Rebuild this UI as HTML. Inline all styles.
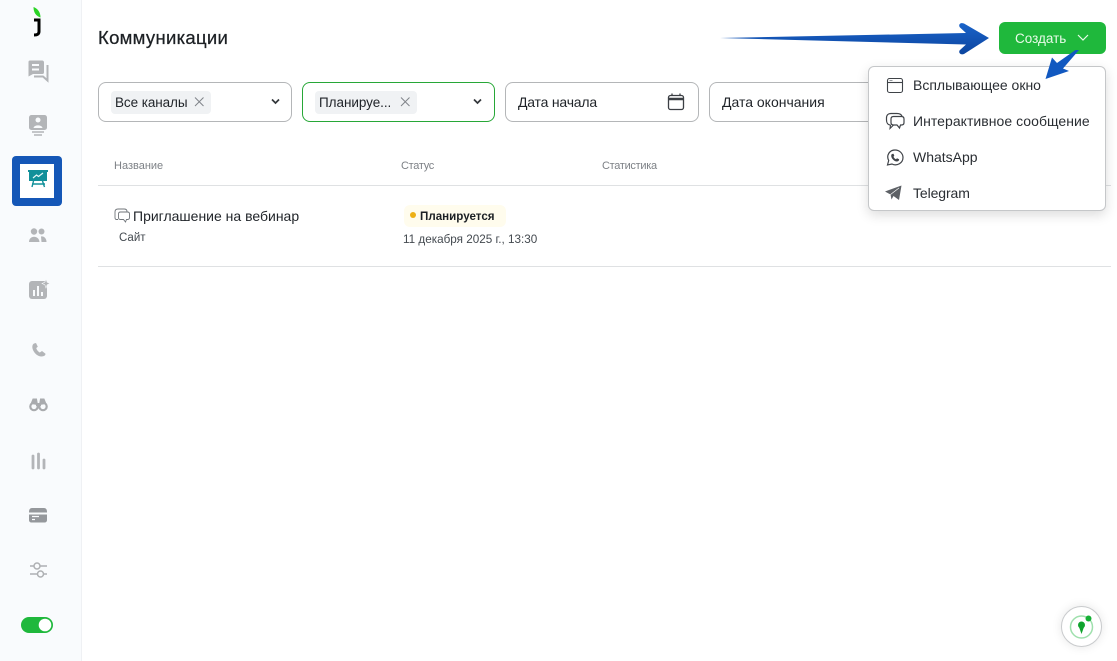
<!DOCTYPE html>
<html lang="ru"><head><meta charset="utf-8"><title>Коммуникации</title>
<style>
*{box-sizing:border-box}
html,body{margin:0;padding:0;width:1117px;height:661px;overflow:hidden;background:#fff;font-family:"Liberation Sans",sans-serif;color:#1f2328}
.a{position:absolute;white-space:nowrap}
svg{position:absolute;overflow:visible}
.box{position:absolute;top:82px;height:40px;border:1px solid #b4b6b8;border-radius:8px;background:#fff}
.t{font-size:14px;line-height:18px}
.th{font-size:11px;color:#7d8186;line-height:14px}
.tag{position:absolute;top:91px;height:23px;background:#f0f2f4;border-radius:4px}
</style></head><body>
<div class="a" style="left:0;top:0;width:82px;height:661px;background:#f9fbfd;border-right:1px solid #eff1f4"></div>

<!-- sidebar icons -->
<svg style="left:0;top:0" width="82" height="661">
<path d="M33.500 7C37.500 8.500 40.500 12 40.500 17.500C36 16 33.500 12.500 33.500 7Z" fill="#2bd326"/>
<path d="M34 20H39V31.500C39 34 37.500 35 34 35" fill="none" stroke="#000" stroke-width="3"/>
<path d="M30 60.500H42C43.500 60.500 44 61.500 44 62.500V72C44 73.500 43.500 74 42 74H33L28.500 76.500V62C28.500 61 29 60.500 30 60.500Z" fill="#b3b5b8"/>
<path d="M32 65H39M32 69.500H39" stroke="#f9fbfd" stroke-width="2"/>
<path d="M46.500 66H47.500V80.500L43 76.500H34" fill="none" stroke="#b3b5b8" stroke-width="2"/>
<rect x="29" y="115" width="18" height="15" rx="2.500" fill="#b3b5b8"/>
<circle cx="38" cy="120" r="2.500" fill="#f9fbfd"/><path d="M33.500 128C34 124.500 42 124.500 42.500 128Z" fill="#f9fbfd"/>
<path d="M32 132H44M34 135H42" stroke="#b3b5b8" stroke-width="1.500"/>
<rect x="12" y="156" width="50" height="50" rx="4" fill="#1557b7"/>
<rect x="20" y="164" width="34" height="34" fill="#fff"/>
<path d="M28 170H48V172H47V181H29V172H28Z" fill="#12909a"/>
<path d="M33 178L36.500 175L38.500 176.500L43 173" fill="none" stroke="#e8f7f7" stroke-width="1.200"/>
<path d="M32 184H45M33.500 181L32 187M42.500 181L44.500 187" fill="none" stroke="#12909a" stroke-width="1.400"/>
<circle cx="34" cy="231.500" r="3.200" fill="#b3b5b8"/><circle cx="41.500" cy="231.500" r="3" fill="#b3b5b8"/>
<path d="M29 242C29 235 39 235 39.500 242Z" fill="#b3b5b8"/><path d="M41 236.500C44 236 46.500 238.500 46.500 242H41.500Z" fill="#b3b5b8"/>
<rect x="29" y="281" width="18" height="18" rx="3" fill="#b3b5b8"/>
<path d="M34 290V296M38 286V296M42 292V296" stroke="#f9fbfd" stroke-width="2"/>
<path d="M46 279L47.200 282.300L50 283.500L47.200 284.700L46 288L44.800 284.700L42 283.500L44.800 282.300Z" fill="#b3b5b8" stroke="#f9fbfd" stroke-width=".6"/>
<path d="M34 343.500C32 344.500 32 347.500 33 350C34.500 353.500 38 356.500 41.500 356.500C44 356.500 45.500 355.500 45.500 353.800L42 351L39.800 352.500C38 351.500 36.500 349.500 36.300 348L37.800 346.800L36 343Z" fill="#b3b5b8"/>
<circle cx="34" cy="406.500" r="3.700" fill="none" stroke="#a9abae" stroke-width="2.200"/><circle cx="43" cy="406.500" r="3.700" fill="none" stroke="#a9abae" stroke-width="2.200"/>
<path d="M31 404L33 399H36.500L37.500 405M46 404L44 399H40.500L39.500 405" fill="#a9abae" stroke="#a9abae"/>
<rect x="36" y="403" width="5" height="3" fill="#a9abae"/>
<path d="M33 456V468M38.500 454V468M44 460V468" stroke="#b3b5b8" stroke-width="2.800" stroke-linecap="round"/>
<path d="M29 512C29 509.500 30 508 32 508H44C46 508 47 509.500 47 512V512.500H29Z" fill="#95989c"/>
<path d="M29 514.500H47V520C47 521.500 46 522.500 44.500 522.500H31.500C30 522.500 29 521.500 29 520Z" fill="#95989c"/>
<path d="M32 516.500H39M32 519.500H35" stroke="#f9fbfd" stroke-width="1.200"/>
<path d="M30 566H33.500M40.500 566H47M30 574H37M43.500 574H47" stroke="#aeb0b3" stroke-width="1.500"/>
<circle cx="37" cy="566" r="3" fill="none" stroke="#aeb0b3" stroke-width="1.500"/><circle cx="40.500" cy="574" r="3" fill="none" stroke="#aeb0b3" stroke-width="1.500"/>
<rect x="21" y="617" width="32" height="16" rx="8" fill="#1fb83c"/><circle cx="45" cy="625" r="6.300" fill="#fff"/>
</svg>

<div class="a" style="left:98px;top:27px;font-size:18.500px;line-height:22px;letter-spacing:.3px;color:#1c2024;-webkit-text-stroke:.25px #1c2024">Коммуникации</div>

<!-- filters -->
<div class="box" style="left:98px;width:194px"></div>
<div class="tag" style="left:111px;width:100px"></div>
<div class="a t" style="left:115px;top:94px;font-size:13.500px;letter-spacing:-.08px">Все каналы</div>
<div class="box" style="left:302px;width:193px;border-color:#27a737"></div>
<div class="tag" style="left:315px;width:102px"></div>
<div class="a t" style="left:319px;top:94px;font-size:13.500px;letter-spacing:-.05px">Планируе...</div>
<div class="box" style="left:505px;width:194px"></div>
<div class="a t" style="left:518px;top:93px;letter-spacing:-.2px">Дата начала</div>
<div class="box" style="left:709px;width:194px"></div>
<div class="a t" style="left:722px;top:93px">Дата окончания</div>
<svg style="left:0;top:0" width="900" height="130">
<path d="M195 97.500L203.500 106M203.500 97.500L195 106" stroke="#808489" stroke-width="1"/>
<path d="M272 99.500L275.500 103L279 99.500" fill="none" stroke="#33373b" stroke-width="1.700"/>
<path d="M401 97.500L409.500 106M409.500 97.500L401 106" stroke="#808489" stroke-width="1"/>
<path d="M474 99.500L477.500 103L481 99.500" fill="none" stroke="#33373b" stroke-width="1.700"/>
<rect x="668.500" y="95.500" width="15" height="14" rx="2" fill="none" stroke="#3b3f44" stroke-width="1.300"/><path d="M668.500 99H683.500" stroke="#3b3f44" stroke-width="2.500"/><path d="M672 93.500V96M680 93.500V96" stroke="#3b3f44" stroke-width="1.300"/>
</svg>

<!-- table -->
<div class="a th" style="left:114px;top:159px">Название</div>
<div class="a th" style="left:401px;top:159px;letter-spacing:-.3px">Статус</div>
<div class="a th" style="left:602px;top:159px;letter-spacing:-.3px">Статистика</div>
<div class="a" style="left:98px;top:185px;width:1013px;height:1px;background:#dfe1e3"></div>
<div class="a" style="left:98px;top:266px;width:1013px;height:1px;background:#dfe1e3"></div>
<svg style="left:0;top:0" width="140" height="230"><path d="M118 219.500L116.500 219.500C115.500 219.500 115 218.500 115 217.500V212C115 210 116 209 118 209H124C126 209 127 210 127 211.500" fill="none" stroke="#70757a" stroke-width=".9"/><path d="M120.500 212H127.500C129 212 129.500 212.500 129.500 214V217.500C129.500 219 129 219.500 127.500 219.500H126.500L125.500 222L123.500 219.500H120.500C119 219.500 118.500 219 118.500 217.500V214C118.500 212.500 119 212 120.500 212Z" fill="#fff" stroke="#70757a" stroke-width=".9"/></svg>
<div class="a" style="left:133px;top:207px;font-size:14px;line-height:18px">Приглашение на вебинар</div>
<div class="a" style="left:119px;top:230px;font-size:11.500px;line-height:16px;color:#444a50">Сайт</div>
<div class="a" style="left:404px;top:205px;width:102px;height:22px;background:#fffced;border-radius:6px"></div>
<div class="a" style="left:410px;top:212px;width:6px;height:6px;border-radius:50%;background:#edb016"></div>
<div class="a" style="left:420px;top:209px;font-size:11.600px;font-weight:700;line-height:16px;color:#1c2024">Планируется</div>
<div class="a" style="left:403px;top:232px;font-size:11.700px;line-height:16px;color:#444a50">11 декабря 2025 г., 13:30</div>

<!-- button -->
<div class="a" style="left:999px;top:22px;width:107px;height:32px;border-radius:6px;background:#1fb83c"></div>
<div class="a" style="left:1015px;top:30px;font-size:13.500px;line-height:18px;color:#e9fbe9">Создать</div>
<svg style="left:0;top:0" width="1117" height="100"><path d="M1078 35L1083 40L1088 35" fill="none" stroke="#e9fbe9" stroke-width="1.200"/></svg>

<!-- dropdown -->
<div class="a" style="left:868px;top:66px;width:238px;height:145px;background:#fff;border:1px solid #c5c7c9;border-radius:6px;box-shadow:0 4px 12px rgba(0,0,0,.14)"></div>
<svg style="left:0;top:0" width="1117" height="220">
<rect x="887.500" y="78.500" width="15" height="14" rx="2" fill="none" stroke="#3f4348" stroke-width="1.100"/><path d="M887.500 82.500H902.500" stroke="#3f4348" stroke-width="1.100"/><path d="M889.500 80.500H892.500" stroke="#8a8e92" stroke-width=".9"/>
<path d="M890.500 125C888 125 886.500 123 886.500 120V118C886.500 115 888.500 113.500 891 113.500H897C900 113.500 901.500 114.500 902 116.500" fill="none" stroke="#3f4348" stroke-width="1.200"/>
<path d="M893.500 116.500H901.500C903 116.500 904 117.500 904 119V122.500C904 124 903 125 901.500 125H900.500L899.500 128L897 125H893.500C892 125 891 124 891 122.500V119C891 117.500 892 116.500 893.500 116.500Z" fill="#fff" stroke="#3f4348" stroke-width="1.200"/>
<path d="M890.500 125L890 128.500L893.500 125" fill="none" stroke="#3f4348" stroke-width="1.100"/>
<path d="M887.500 165L888.700 160.500C886 155.500 889.500 150 895 150C899.500 150 903 153.500 903 157.500C903 163 897 166.500 892 164Z" fill="none" stroke="#3f4348" stroke-width="1.200"/>
<path d="M892 154C890.800 155 891 157 892.500 159C894 161 896.500 162 898 161.300C899 160.800 899.300 159.800 899 159.300L897 158.300L896 159.300C895 159 893.800 157.800 893.500 156.800L894.300 155.800L893.500 153.800Z" fill="#3f4348"/>
<path d="M885 191.500L901.500 185.500L899 200L893.500 196L891.500 199.500L890.500 194.500Z" fill="#5d6166"/>
<path d="M890.500 194.500L899 188" stroke="#fff" stroke-width=".7"/>
</svg>
<div class="a t" style="left:913px;top:76px;color:#2a2e33">Всплывающее окно</div>
<div class="a t" style="left:913px;top:112px;color:#2a2e33;letter-spacing:.04px">Интерактивное сообщение</div>
<div class="a t" style="left:913px;top:148px;color:#2a2e33">WhatsApp</div>
<div class="a t" style="left:913px;top:184px;color:#2a2e33;letter-spacing:-.1px">Telegram</div>

<!-- arrows -->
<svg style="left:0;top:0" width="1117" height="120">
<defs><linearGradient id="g" x1="0" y1="0" x2="0" y2="1"><stop offset="0" stop-color="#1a63c9"/><stop offset="1" stop-color="#0c459f"/></linearGradient></defs>
<path d="M720 38L966 33L960 27.500C958 25 960 22 964 23.500L989 38L964 54C960 55.500 958 52 960 50L966 44.500Z" fill="url(#g)"/>
<path d="M1079 50L1063 68.500L1069 71L1045.500 79L1052 57.500L1057 63L1075.500 50Z" fill="#1158c0"/>
</svg>

<!-- help -->
<div class="a" style="left:1061px;top:606px;width:41px;height:41px;border-radius:50%;background:#fff;border:1px solid #c9cbcd;box-shadow:0 0 10px rgba(0,0,0,.1)"></div>
<svg style="left:0;top:0" width="1117" height="661">
<circle cx="1081.500" cy="627" r="11" fill="none" stroke="#9fe0ad" stroke-width="1.500"/>
<circle cx="1088.500" cy="618.500" r="3" fill="#16b036"/>
<circle cx="1081.500" cy="625" r="3.500" fill="#0fa32d"/><path d="M1079 627L1081.500 634L1084 627Z" fill="#0fa32d"/>
</svg>
</body></html>
